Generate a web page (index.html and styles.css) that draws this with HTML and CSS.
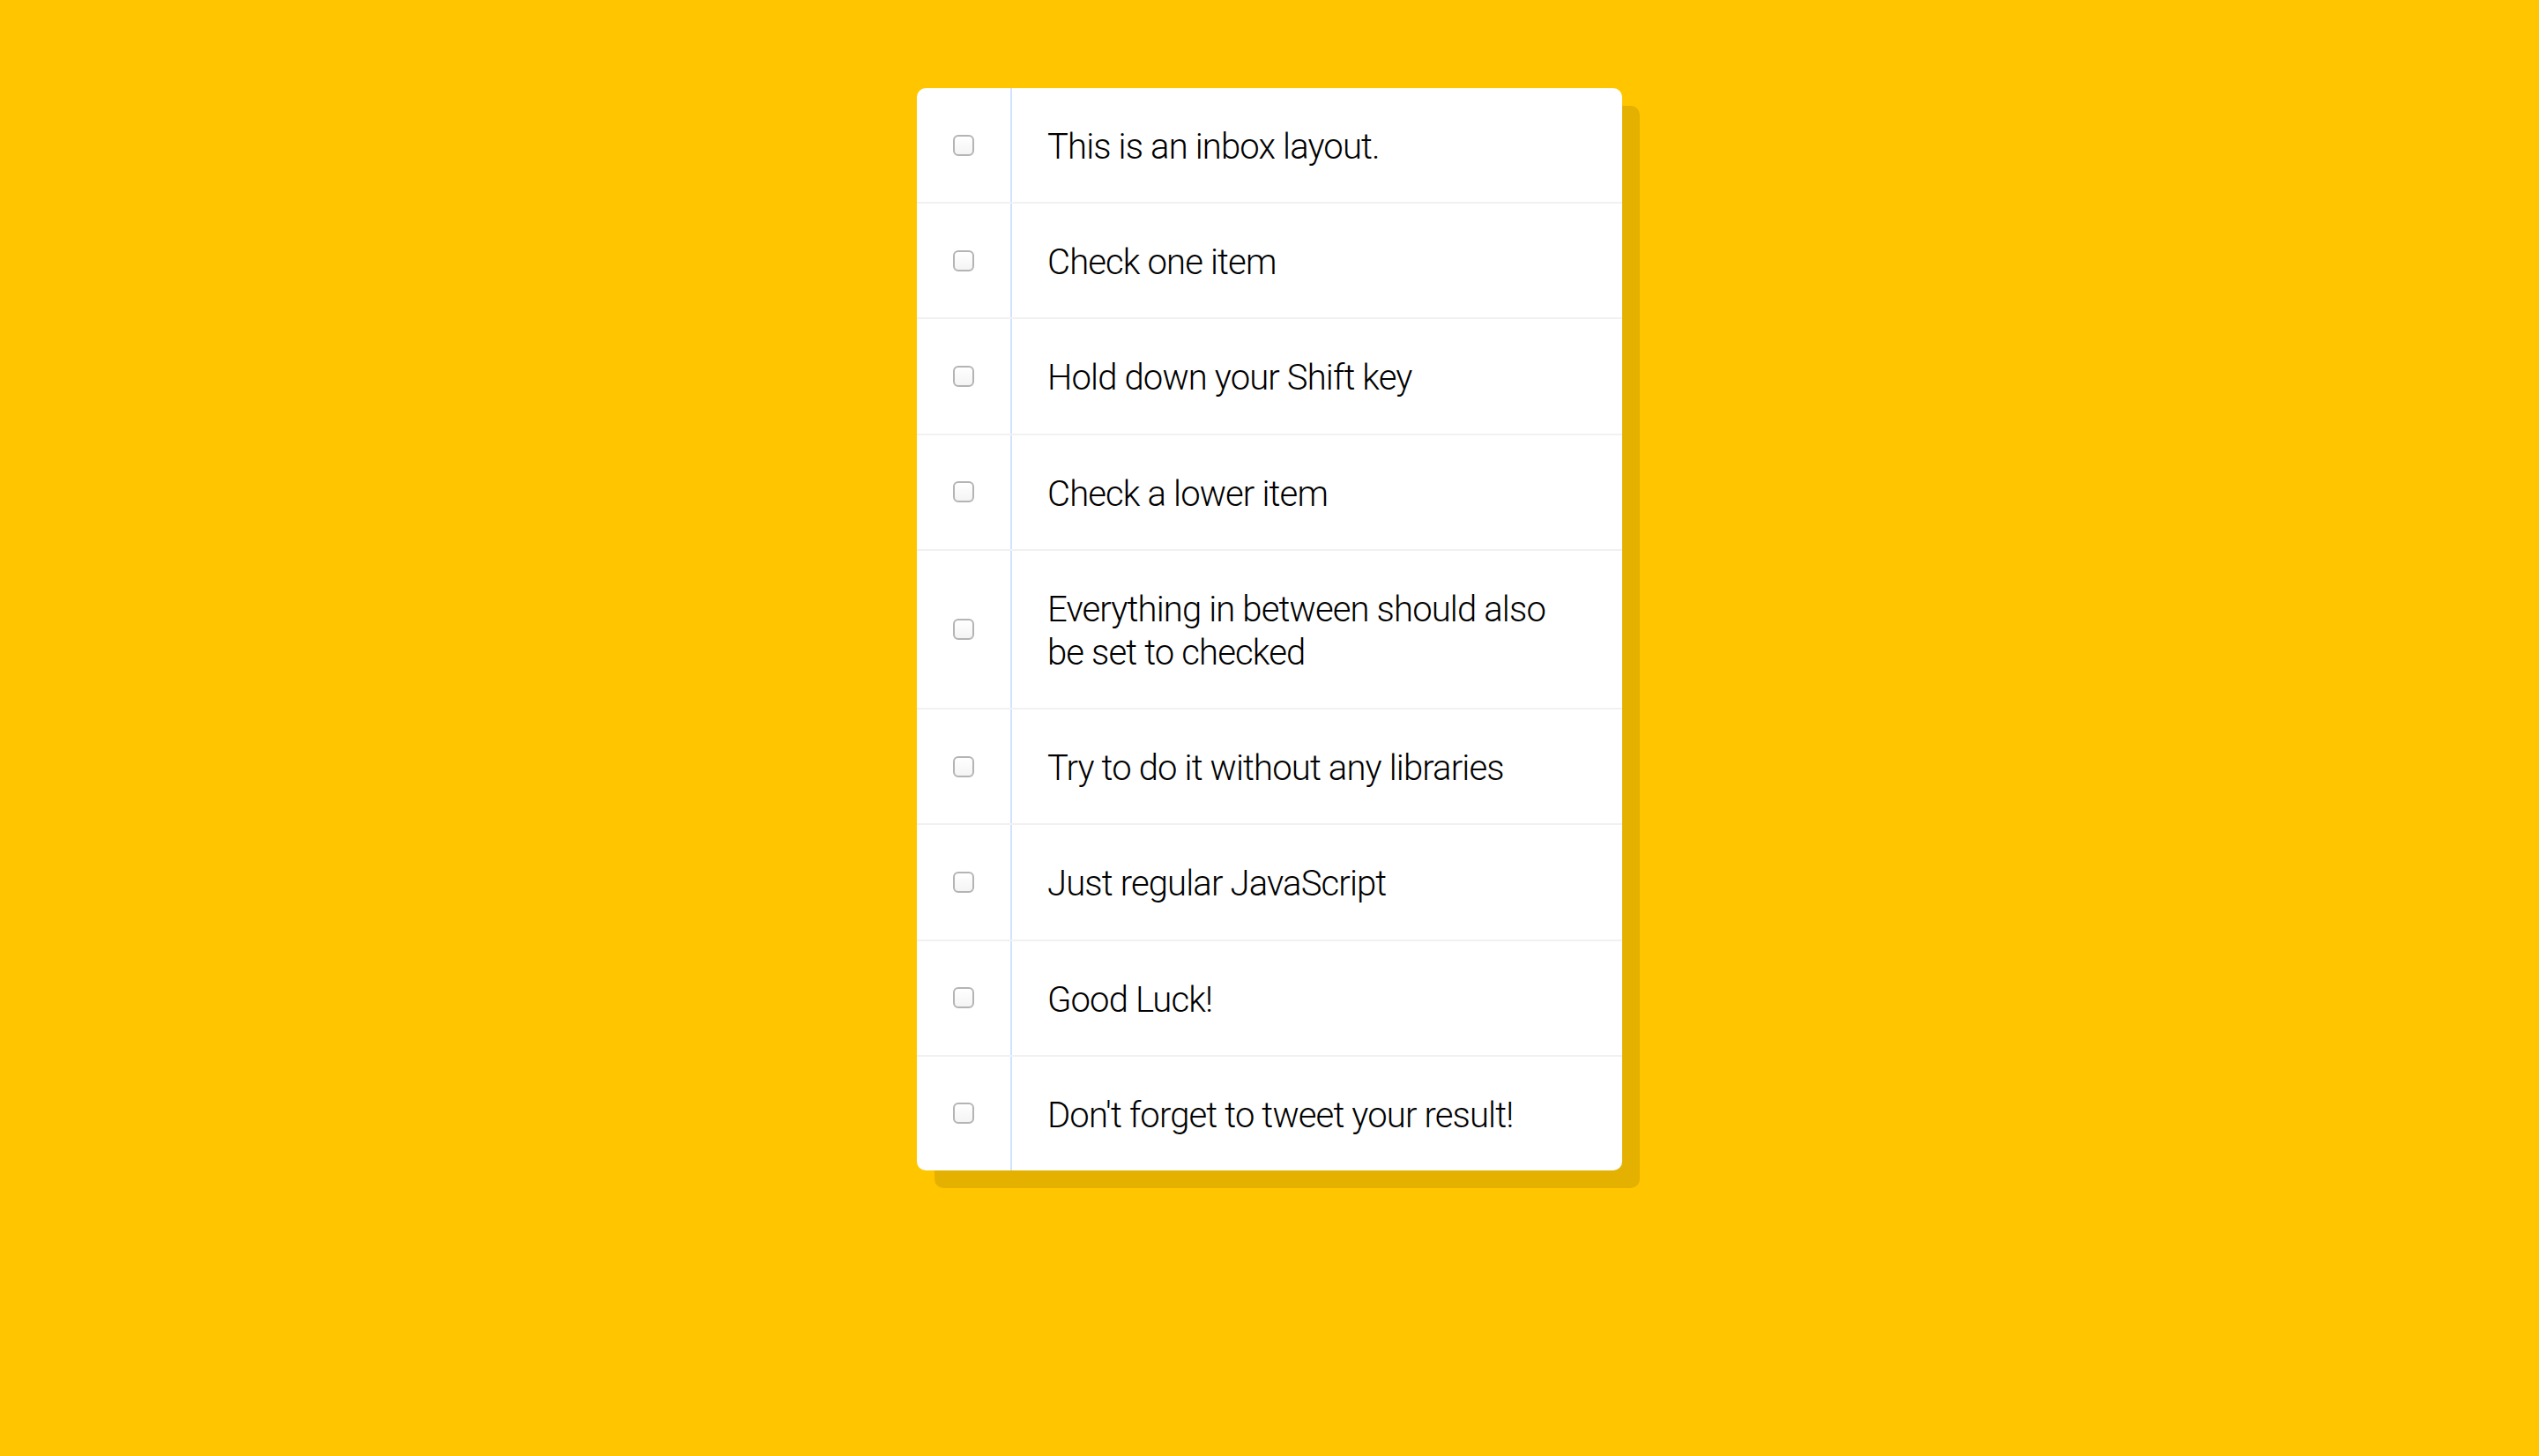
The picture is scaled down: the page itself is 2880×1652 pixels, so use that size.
FILE: index.html
```html
<!DOCTYPE html>
<html>
<head>
<meta charset="utf-8">
<title>Hold Shift to Check Multiple Checkboxes</title>
<link rel="stylesheet" href="styles.css">
</head>
<body>
<div class="inbox">
  <div class="item"><input type="checkbox"><p>This is an inbox layout.</p></div>
  <div class="item"><input type="checkbox"><p>Check one item</p></div>
  <div class="item"><input type="checkbox"><p>Hold down your Shift key</p></div>
  <div class="item"><input type="checkbox"><p>Check a lower item</p></div>
  <div class="item"><input type="checkbox"><p>Everything in between should also be set to checked</p></div>
  <div class="item"><input type="checkbox"><p>Try to do it without any libraries</p></div>
  <div class="item"><input type="checkbox"><p>Just regular JavaScript</p></div>
  <div class="item"><input type="checkbox"><p>Good Luck!</p></div>
  <div class="item"><input type="checkbox"><p>Don't forget to tweet your result!</p></div>
</div>
</body>
</html>
```
FILE: styles.css
```css
html {
  background: #ffc600;
}
body {
  margin: 0;
  font-family: "Roboto", "Liberation Sans", sans-serif;
}
.inbox {
  max-width: 800px;
  margin: 100px auto;
  background: #fff;
  border-radius: 10px;
  box-shadow: 20px 20px 0 rgba(0, 0, 0, 0.1);
}
.item {
  display: flex;
  align-items: center;
  border-bottom: 2px solid #f1f1f1;
}
.item:last-child {
  border-bottom: 0;
}
.item input[type="checkbox"] {
  appearance: none;
  -webkit-appearance: none;
  width: 24px;
  height: 24px;
  margin: 40px 41px;
  box-sizing: border-box;
  border: 2px solid #b4b4b4;
  border-radius: 6px;
  background: linear-gradient(#ffffff, #f4f4f4);
  flex: none;
}
.item p {
  margin: 0;
  padding: 42px 40px 38px;
  flex: 1;
  font-size: 40px;
  font-weight: 300;
  letter-spacing: -0.85px;
  line-height: 49.2px;
  color: #000;
  border-left: 2px solid #d1e2ff;
}
```
